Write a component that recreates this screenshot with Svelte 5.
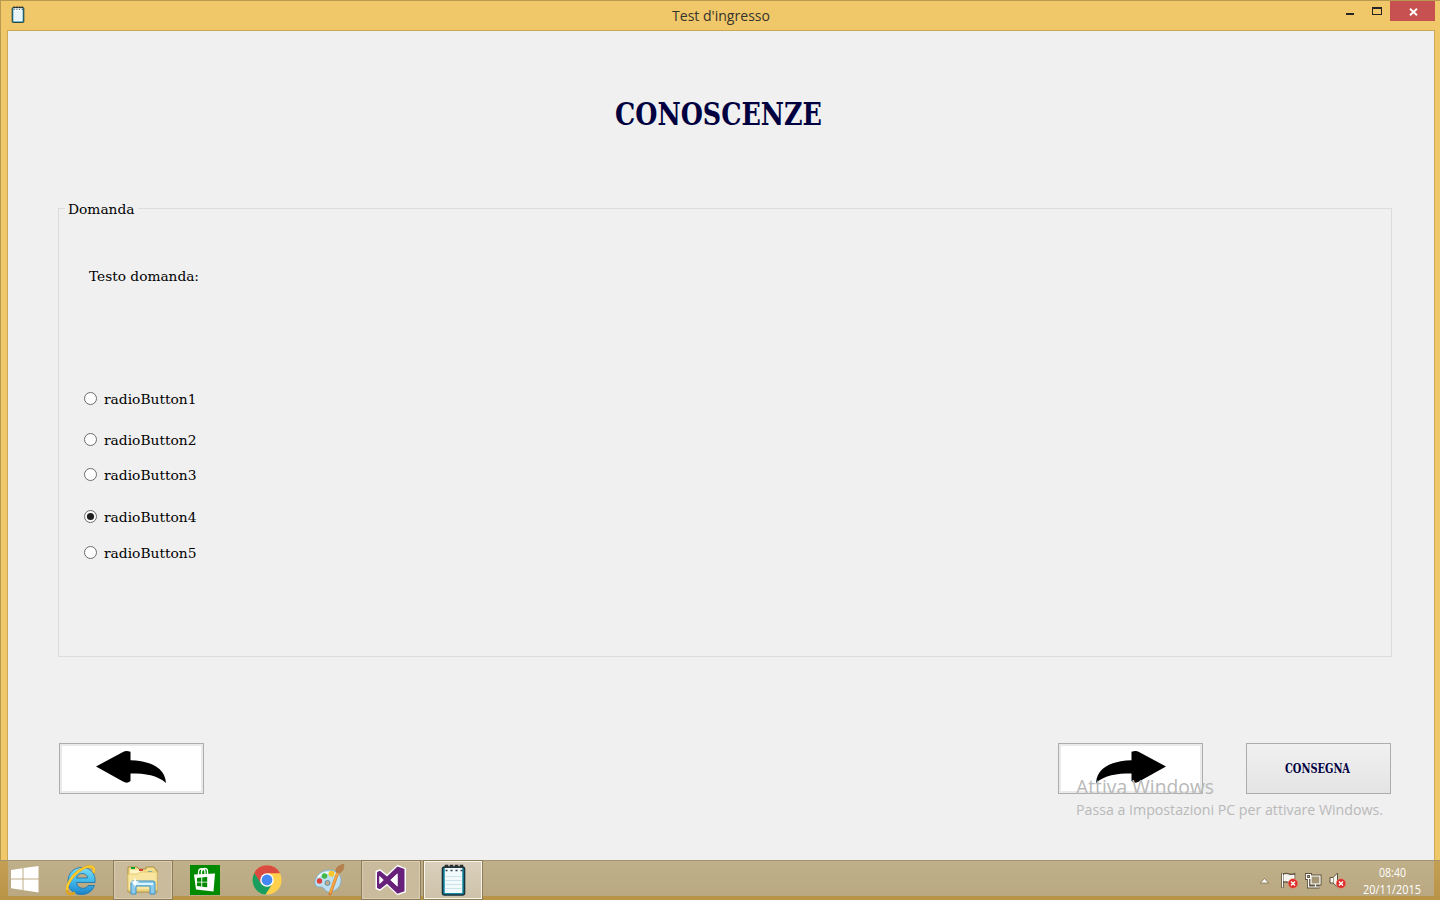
<script>
  const options = [
    { n: 1, gap: 0 }, { n: 2, gap: 24 }, { n: 3, gap: 18 }, { n: 4, gap: 25 }, { n: 5, gap: 19 }
  ];
  let selected = $state(4);
</script>

{#snippet label(text, width, size, cls)}
  <svg class="label {cls}" width={width} height={Math.ceil(size * 1.2)}>
    <text x="0" y={Math.round(size)} font-size={size} textLength={width} lengthAdjust="spacingAndGlyphs">{text}</text>
  </svg>
{/snippet}

{#snippet arrow()}
  <svg width="70" height="32" viewBox="0 0 70 32">
    <path d="M0 15.5 27 1Q30-.8 34.5.8V9.2C51 9.5 69 15 70 32 61 24 50 22.5 34.5 22.5V30Q31 33 27 30.5Z" fill="#000" />
  </svg>
{/snippet}

{#snippet notepad(w, h)}
  <svg width={w} height={h} viewBox="0 0 24 32">
    <rect x="1" y="3" width="22" height="28" rx="2" fill="#188ba5" stroke="#17323d" stroke-width="1.6" />
    <rect x="3.300" y="4" width="17.400" height="25" fill="#f2fafc" />
    <path d="M3.300 12.5h17.400M3.300 16.5h17.400M3.300 20.5h17.400M3.300 24.5h17.400" stroke="#cde3ec" />
    <path d="M4 6.500h2m3 0h2m3 0h2m3 0h2" stroke="#32464d" stroke-width="1.6" />
    <path d="M4 4V1.500h2V4m3 0V1.500h2V4m3 0V1.500h2V4m3 0V1.500h2V4" fill="none" stroke="#292c2b" stroke-width="1.500" />
  </svg>
{/snippet}

{#snippet error()}
  <circle cx="12" cy="11.500" r="4.800" fill="#dc2c25" stroke="#f08b80" stroke-width=".6" />
  <path d="m10 9.500 4 4m0-4-4 4" stroke="#fff" stroke-width="1.500" />
{/snippet}

<div class="desktop">
  <header>
    <span class="app-icon">{@render notepad(14, 17)}</span>
    <span class="title">{@render label("Test d'ingresso", 98, 15, 'sans')}</span>
    <div class="controls">
      <svg width="50" height="20" viewBox="0 0 50 20" shape-rendering="crispEdges">
        <path d="M6 12h8v2H6z" fill="#252525" />
        <path fill-rule="evenodd" d="M32 6h10v8H32zM33 8v5h8V8z" fill="#252525" />
      </svg>
      <button class="close" aria-label="Chiudi">
        <svg width="9" height="8" viewBox="0 0 9 8"><path d="m1 .7 7 6.600m0-6.600-7 6.600" stroke="#fff" stroke-width="1.900" /></svg>
      </button>
    </div>
  </header>

  <main>
    <h1>{@render label('CONOSCENZE', 207, 31.5, 'serif')}</h1>
    <section class="group">
      <div class="legend">{@render label('Domanda', 66.5, 13.5, 'serif')}</div>
      <div class="question">{@render label('Testo domanda:', 110, 13.5, 'serif')}</div>
      <div class="options">
        {#each options as o}
          <button class="option" style:margin-top="{o.gap}px" onclick={() => (selected = o.n)}>
            <svg width="13" height="13" viewBox="0 0 13 13">
              <circle cx="6.500" cy="6.500" r="6" fill="#fff" stroke="#6c6c6c" />
              {#if selected === o.n}<circle cx="6.500" cy="6.500" r="3.600" fill="#202020" />{/if}
            </svg>
            {@render label('radioButton' + o.n, 92.5, 13.5, 'serif')}
          </button>
        {/each}
      </div>
    </section>
    <div class="actions">
      <button class="nav" aria-label="Indietro">{@render arrow()}</button>
      <button class="nav next" aria-label="Avanti">{@render arrow()}</button>
      <button class="submit">{@render label('CONSEGNA', 65, 12.5, 'serif')}</button>
    </div>
  </main>

  <div class="watermark">
    {@render label('Attiva Windows', 138, 20, 'sans')}
    {@render label('Passa a Impostazioni PC per attivare Windows.', 307, 15, 'sans')}
  </div>

  <footer>
    <div class="start">
      <svg width="28" height="27" viewBox="0 0 28 27"><path d="M0 4 11.500 2.200V12.500H0zM12.500 2 27.500 0v12.500h-15zM0 13.500h11.500v10.400L0 22.300zM12.500 13.500h15V26.500l-15-2.300z" fill="#fff" /></svg>
    </div>
    <div class="task">
      <svg width="32" height="32" viewBox="0 0 32 32">
        <defs><linearGradient id="ie" x2="0" y2="1"><stop stop-color="#7ddcf8" /><stop offset=".5" stop-color="#42b9ea" /><stop offset="1" stop-color="#1c83cb" /></linearGradient></defs>
        <path fill-rule="evenodd" d="M30 18.500H11.500C12 25 21 26 23 21.500H29.500C27 28 22 30.500 16.500 30.500 8 30.500 3 24.500 3 17.500 3 9 9 3.500 16.500 3.500 26 3.500 31 10 30 18.500ZM11.500 14H22.500C22 8 12.500 8 11.500 14Z" fill="url(#ie)" stroke="#1872aa" stroke-width=".8" />
        <path d="M28.500 9C31 2 25 .5 17 5 8 10 1.500 20 2 26.500 2.300 31 6 31 10 28.500" fill="none" stroke="#e0a21a" stroke-width="2.600" />
        <path d="M28.500 8.500C31 2 25 .5 17 5 8 10 1.500 20 2 26" fill="none" stroke="#ffd12e" stroke-width="1.900" />
      </svg>
    </div>
    <div class="task open">
      <svg width="34" height="32" viewBox="0 0 34 32">
        <path d="M2 6V3h9l2 2h7V3h8l2 3h1v22H2z" fill="#f3dc8c" stroke="#ad8f42" />
        <path d="M4 6h12l2 2h12v3H4z" fill="#fff4c5" /><path d="M5 3h4v2H5z" fill="#0ca33a" /><path d="M13 5h4v2h-4z" fill="#d24338" /><path d="M22 7h4v2h-4z" fill="#2493d4" />
        <path d="M2 10h10l2-2h17v18H2z" fill="#f8e6a0" stroke="#e4c86a" />
        <path d="M5 30V19q0-2 2-2h20q2 0 2 2v11h-5v-8H10v8z" fill="#8ccbed" stroke="#3c91c2" /><path d="M7 20h20" stroke="#d9f5ff" stroke-width="2" />
        <path d="m9 13 1 4 4 1-4 1-1 5-1-5-4-1 4-1z" fill="#fff" />
      </svg>
    </div>
    <div class="task">
      <svg width="30" height="30" viewBox="0 0 30 30">
        <path d="M0 0h30v30H0z" fill="#008a00" />
        <path d="M8.500 10V7.500C8.500 2.500 15 2.500 15 7.500V9M11.500 10V6.500c1-4 6-4 6 0V9" fill="none" stroke="#fff" stroke-width="1.300" />
        <path d="m4 9.500 21-1-1.500 18-17.500-2z" fill="#fff" />
        <path d="m7 13 4.300-.5v4.200H7zm5.200-.6 5-.6v4.900h-5zM7 17.500h4.300v4L7 21zm5.200 0h5v4.800l-5-.6z" fill="#008a00" />
      </svg>
    </div>
    <div class="task">
      <svg width="30" height="30" viewBox="0 0 30 30">
        <circle cx="15" cy="15" r="14.600" fill="#ffd04b" />
        <path d="M15 15 8.500 18.500 2 8.200A14.600 14.600 0 0 1 28 8.300H15z" fill="#db4b3f" />
        <path d="M2.200 8A14.600 14.600 0 0 0 13.500 29.600L20.500 18.500Q15 24 9 18.500z" fill="#199e60" />
        <circle cx="15" cy="15" r="6.800" fill="#fff" /><circle cx="15" cy="15" r="5.400" fill="#4688f2" />
      </svg>
    </div>
    <div class="task">
      <svg width="32" height="32" viewBox="0 0 32 32">
        <path d="M5 11C10 5 21 4 26 10 31 17 26 27 17 28 12 29 12 23 8 23 2 24-1 18 5 11Z" fill="#bcdff1" stroke="#7ba9c4" stroke-width=".8" />
        <path d="M5 13C10 8 20 7 24 12" fill="none" stroke="#f1fbff" stroke-width="2" />
        <circle cx="6.500" cy="17" r="2.700" fill="#df4039" /><circle cx="11.500" cy="12" r="2.800" fill="#44b84c" /><circle cx="18.500" cy="9.800" r="3" fill="#f7c827" /><circle cx="14.500" cy="19" r="2.500" fill="#c0ae88" stroke="#688fa8" />
        <path d="M25 8 17 30" stroke="#d28435" stroke-width="3.200" stroke-linecap="round" /><path d="M25 8 17 29" stroke="#f5a645" stroke-width="2" />
        <path d="M23 8C22 3 27 1 31 0 30 4 32 5 27 9Z" fill="#b97f4b" stroke="#a8794a" stroke-width=".6" />
      </svg>
    </div>
    <div class="task open vs">
      <svg width="33" height="32" viewBox="0 0 33 32">
        <path d="M1.500 7 6 5l7 5.500L23.500.8 32 4.200v24l-8.500 3L13 21.500 6 27l-4.500-2z" fill="#fff" />
        <path fill-rule="evenodd" d="M3 8 6 6.800l7 5.700L23.500 2.500 30.500 5v22.200l-7 2.600L13 19.700l-7 5.500-3-1.300zM5.500 12v8l4-4zM23.500 9.500 16.500 16l7 6.500z" fill="#68217a" />
        <path d="M5.500 12v8l4-4zM23.500 9.500 16.500 16l7 6.500z" fill="#fff" />
      </svg>
    </div>
    <div class="task open active">{@render notepad(25, 32)}</div>
    <div class="tray">
      <svg width="9" height="6" viewBox="0 0 9 6"><path d="m.5 5 4-4.500 4 4.500z" fill="#fff" stroke="#75694f" stroke-width=".7" /></svg>
      <svg width="17" height="17" viewBox="0 0 17 17"><path d="M1.500 1v15M3 2.500c4-2 5 2 10 0v7c-4 2-6-1-10 0z" fill="#f4f1e9" stroke="#5d523d" stroke-width="2.500" /><path d="M1.500 1.500v14M3 3c4-2 5 2 10 0v6c-4 2-6-1-10 0z" fill="#f5f3ed" stroke="#fff" />{@render error()}</svg>
      <svg width="17" height="16" viewBox="0 0 17 16"><path d="M6 3h9v8H6zM10.500 11v3M6.500 14h8M1.500 1.500h4v4h-4zM3.500 5.500V14h3" fill="none" stroke="#5d523d" stroke-width="3" /><path d="M6 3h9v8H6z" fill="#a49574" stroke="#fff" stroke-width="1.200" /><path d="M10.500 11v3M6.500 14h8M1.500 1.500h4v4h-4zM3.500 5.500V14h3" fill="none" stroke="#fff" stroke-width="1.200" /></svg>
      <svg width="17" height="17" viewBox="0 0 17 17"><path d="M1 5.500h3L8.500 1v14L4 11H1z" fill="#f7f5ef" stroke="#5d523d" /><path d="M4.500 5v6" stroke="#a49b84" />{@render error()}</svg>
      <div class="clock">
        {@render label('08:40', 27, 12, 'sans')}
        {@render label('20/11/2015', 58, 12, 'sans')}
      </div>
    </div>
  </footer>
</div>

<style>
  :global(body) { margin: 0; overflow: hidden; }
  .desktop { position: relative; width: 1440px; height: 900px; box-sizing: border-box; background: #f0c869; border-top: 1px solid #b89950; border-left: 1px solid #b89950; display: flex; flex-direction: column; }
  .label { display: block; overflow: visible; flex: none; }
  .sans { font-family: "Open Sans", "Noto Sans", sans-serif; }
  .serif { font-family: "DejaVu Serif", serif; }
  button { font: inherit; padding: 0; border: 0; background: none; }
  header { height: 29px; display: flex; align-items: flex-start; color: #33322c; }
  .app-icon { margin: 5px 0 0 10px; width: 14px; }
  .app-icon svg, .controls svg { display: block; }
  .title { margin: 5px auto 0 647px; fill: #35342e; }
  .controls { display: flex; }
  .close { width: 45px; height: 20px; background: #c75050; display: flex; align-items: center; justify-content: center; margin-right: 5px; }
  .close svg { margin-top: 1px; margin-left: 1px; }
  main { margin: 0 5px 3px 6px; flex: 1; background: #f0f0f0; border: 1px solid #cba856; display: flex; flex-direction: column; }
  h1 { margin: 62px 0 0 607px; font-size: 32px; height: 38px; fill: #000040; font-weight: bold; }
  .group { margin: 77px 42px 0 50px; height: 447px; border: 1px solid #dcdcdc; }
  .legend { width: 73px; height: 17px; box-sizing: border-box; padding: 0 3px; margin: -9px 0 0 6px; background: #f0f0f0; }
  .question { margin: 50px 0 0 30px; height: 17px; }
  .options { display: flex; flex-direction: column; margin: 106px 0 0 25px; }
  .option { display: flex; align-items: center; gap: 7px; height: 17px; width: 130px; }
  .actions { display: flex; margin: 86px 43px 0 51px; }
  .nav, .submit { width: 145px; height: 51px; box-sizing: border-box; border: 1px solid #adadad; }
  .nav { background: #fff; box-shadow: inset 0 0 0 2px #eaeaea; display: flex; justify-content: center; padding: 7px 1px 0 0; }
  .next { margin: 0 43px 0 auto; padding: 7px 0 0 1px; }
  .next svg { transform: scaleX(-1); }
  .submit { background: linear-gradient(#f0f0f0, #e4e4e4); display: flex; justify-content: center; align-items: center; font-weight: bold; fill: #000040; padding: 0 2px 2px 0; }
  .watermark { position: absolute; left: 1075px; top: 773px; fill: #b9b9b9; display: flex; flex-direction: column; gap: 2px; }
  footer { position: absolute; left: -1px; top: 859px; width: 1440px; height: 40px; box-sizing: border-box; border-top: 1px solid #a39370; display: flex; background: linear-gradient(#c0b08a, #b9a881) 8px 0 / 1426px 35px no-repeat, linear-gradient(#c39f55, #b99447); }
  .start { width: 51px; padding: 5px 0 0 11px; box-sizing: border-box; }
  .task { width: 60px; height: 40px; box-sizing: border-box; margin-right: 2px; display: flex; align-items: center; justify-content: center; padding-bottom: 1px; margin-top: -1px; }
  .open { border: 1px solid #8c7c58; box-shadow: inset 0 0 0 1px #d8ccb1; background: #c9bb9b; }
  .vs { padding-right: 2px; }
  .active { background: linear-gradient(#dad0bc, #cec2a9); box-shadow: inset 0 0 0 1px #faf6ec; }
  .tray { margin-left: auto; display: flex; align-items: center; gap: 7px; padding-right: 19px; }
  .tray > svg:first-child { margin-right: 5px; }
  .clock { display: flex; flex-direction: column; align-items: center; gap: 2px; fill: #fff; margin-left: 10px; margin-top: 1px; }
</style>
